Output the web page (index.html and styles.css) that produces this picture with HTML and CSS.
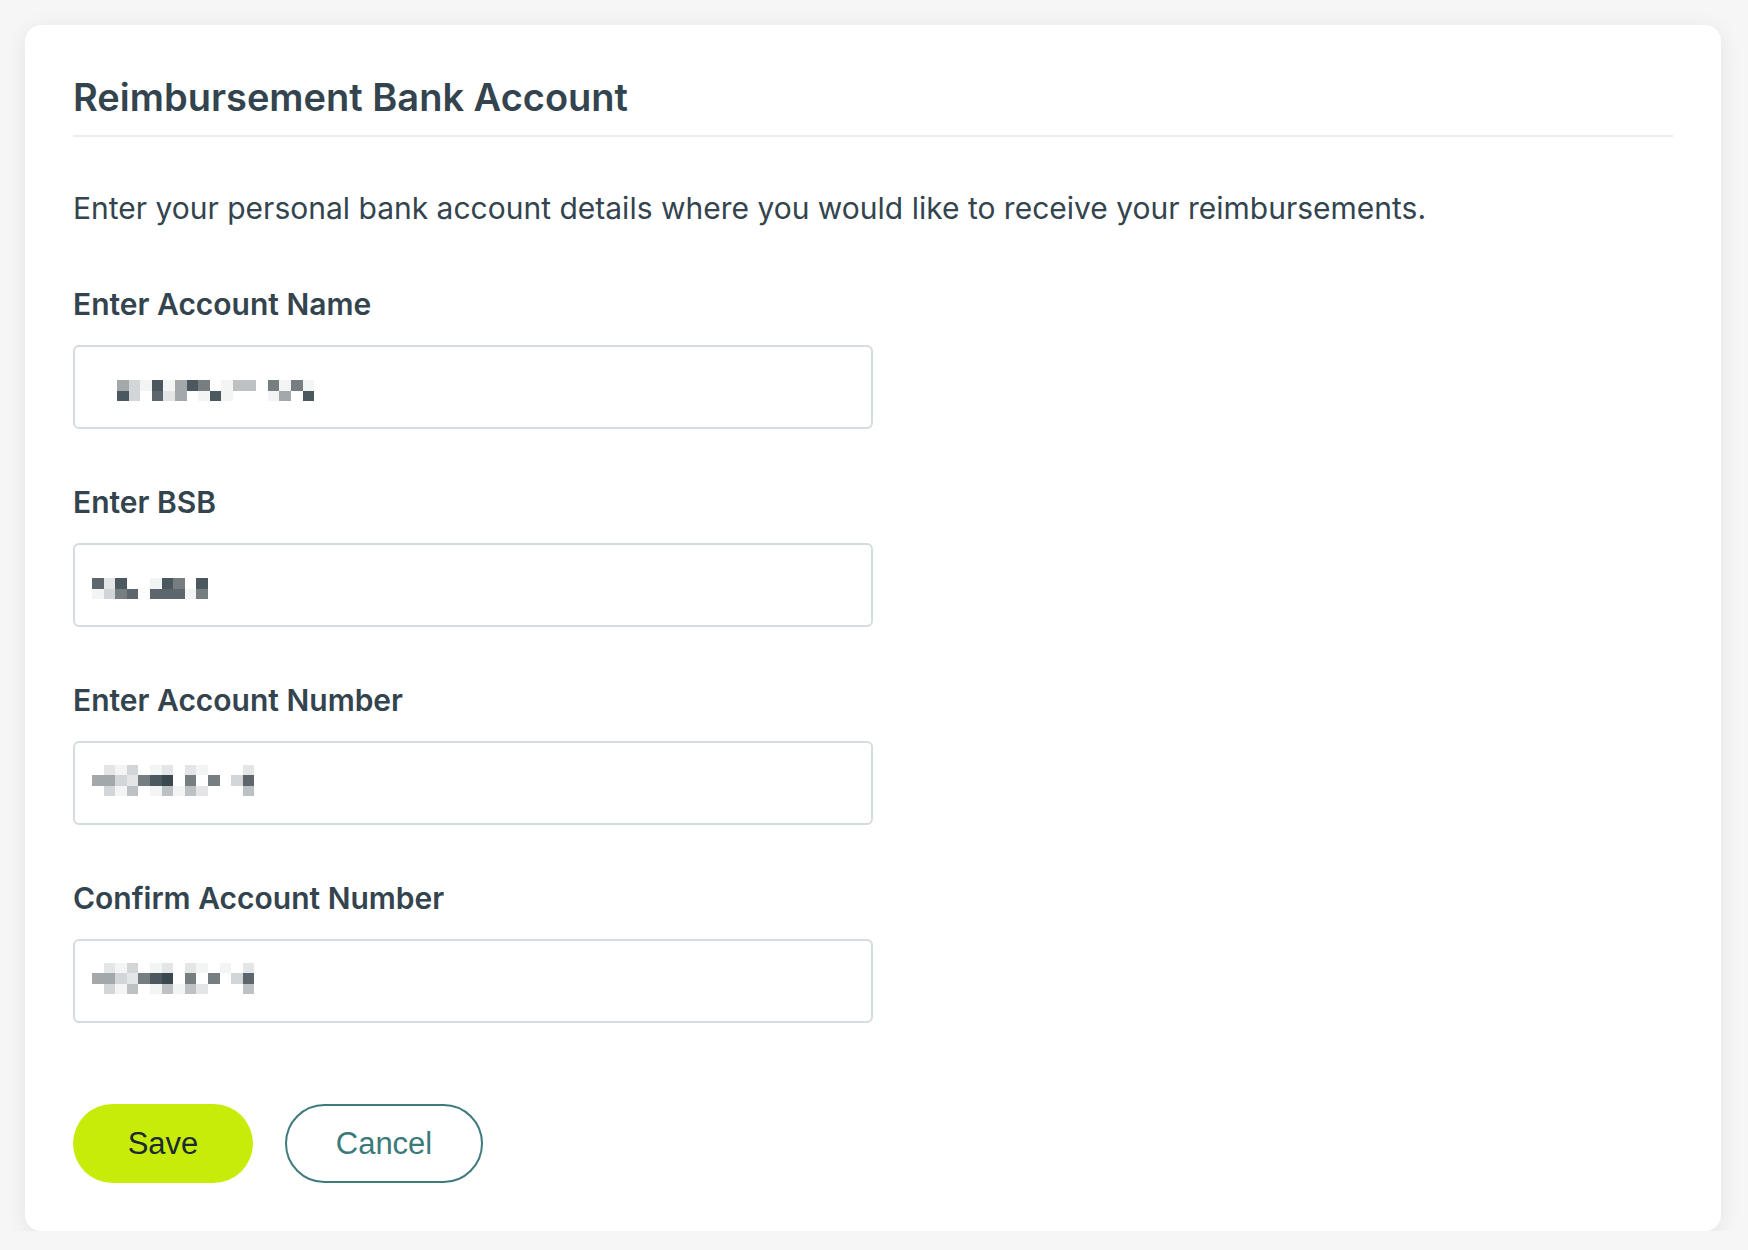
FILE: index.html
```html
<!DOCTYPE html>
<html lang="en">
<head>
    <meta charset="UTF-8">
    <meta name="viewport" content="width=device-width, initial-scale=1.0">
    <title>Reimbursement Bank Account</title>
    <link rel="stylesheet" href="styles.css">
</head>
<body>
    <div class="card">
        <h1>Reimbursement Bank Account</h1>

        <p class="intro">Enter your personal bank account details where you would like to receive your reimbursements.</p>

        <div class="field">
            <label>Enter Account Name</label>
            <div class="input-box">
                <div class="mosaic short indent">
                    <div class="mrow"><span class="k5"></span><span class="k3"></span><span class="k1"></span><span class="k8"></span><span class="k1"></span><span class="k5"></span><span class="k8"></span><span class="k6"></span><span></span><span class="k1"></span><span class="k4"></span><span class="k4"></span><span></span><span class="k6"></span><span class="k1"></span><span class="k6"></span><span class="k1"></span></div>
                    <div class="mrow"><span class="k8"></span><span class="k3"></span><span></span><span class="k7"></span><span class="k2"></span><span class="k5"></span><span></span><span class="k1"></span><span class="k8"></span><span class="k1"></span><span></span><span></span><span></span><span class="k1"></span><span class="k5"></span><span></span><span class="k8"></span></div>
                </div>
            </div>
        </div>

        <div class="field">
            <label>Enter BSB</label>
            <div class="input-box">
                <div class="mosaic short">
                    <div class="mrow"><span class="k7"></span><span class="k2"></span><span class="k8"></span><span></span><span></span><span class="k1"></span><span class="k8"></span><span class="k6"></span><span></span><span class="k8"></span></div>
                    <div class="mrow"><span class="k1"></span><span class="k3"></span><span class="k6"></span><span class="k7"></span><span></span><span class="k7"></span><span class="k7"></span><span class="k7"></span><span class="k1"></span><span class="k6"></span></div>
                </div>
            </div>
        </div>

        <div class="field">
            <label>Enter Account Number</label>
            <div class="input-box">
                <div class="mosaic tall">
                    <div class="mrow"><span></span><span class="k2"></span><span class="k1"></span><span class="k3"></span><span></span><span class="k1"></span><span class="k2"></span><span></span><span class="k2"></span><span class="k1"></span><span></span><span></span><span></span><span class="k2"></span></div>
                    <div class="mrow"><span class="k5"></span><span class="k5"></span><span class="k3"></span><span class="k2"></span><span class="k6"></span><span class="k8"></span><span class="k9"></span><span></span><span class="k6"></span><span></span><span class="k6"></span><span></span><span class="k3"></span><span class="k7"></span></div>
                    <div class="mrow"><span></span><span class="k3"></span><span class="k1"></span><span class="k4"></span><span></span><span class="k1"></span><span class="k4"></span><span class="k1"></span><span class="k4"></span><span class="k2"></span><span></span><span></span><span></span><span class="k4"></span></div>
                </div>
            </div>
        </div>

        <div class="field">
            <label>Confirm Account Number</label>
            <div class="input-box">
                <div class="mosaic tall">
                    <div class="mrow"><span></span><span class="k2"></span><span class="k1"></span><span class="k3"></span><span></span><span class="k1"></span><span class="k2"></span><span></span><span class="k2"></span><span class="k1"></span><span></span><span class="k1"></span><span></span><span class="k2"></span></div>
                    <div class="mrow"><span class="k5"></span><span class="k5"></span><span class="k3"></span><span class="k2"></span><span class="k6"></span><span class="k8"></span><span class="k9"></span><span></span><span class="k6"></span><span></span><span class="k6"></span><span></span><span class="k3"></span><span class="k7"></span></div>
                    <div class="mrow"><span></span><span class="k3"></span><span class="k1"></span><span class="k4"></span><span></span><span class="k1"></span><span class="k4"></span><span class="k1"></span><span class="k4"></span><span class="k2"></span><span></span><span></span><span></span><span class="k4"></span></div>
                </div>
            </div>
        </div>

        <div class="actions">
            <button class="btn btn-save">Save</button>
            <button class="btn btn-cancel">Cancel</button>
        </div>
    </div>
</body>
</html>
```

FILE: styles.css
```css
* {
    margin: 0;
    padding: 0;
    box-sizing: border-box;
}

body {
    background-color: #f6f6f6;
    padding: 25px 27px 0 25px;
    font-family: Inter, "Liberation Sans", sans-serif;
    color: #33444e;
}

.card {
    background: white;
    border-radius: 16px;
    padding: 48px;
    box-shadow: 0 4px 22px rgba(0, 0, 0, 0.08);
}

h1 {
    font-size: 38px;
    font-weight: 600;
    line-height: 48px;
    padding-bottom: 14px;
    border-bottom: 2px solid #ececec;
}

.intro {
    margin-top: 54px;
    font-size: 30px;
    line-height: 34px;
}

.field {
    margin-top: 62px;
}

.field + .field {
    margin-top: 56px;
}

label {
    display: block;
    font-size: 30px;
    line-height: 34px;
    font-weight: 600;
    margin-bottom: 24px;
}

.input-box {
    width: 800px;
    height: 84px;
    border: 2px solid #d3dcdf;
    border-radius: 6px;
    padding-left: 17px;
    display: flex;
    align-items: center;
}

/* pixelated (redacted) values */
.mosaic .mrow {
    display: flex;
}

.mosaic span {
    width: 11.6px;
    height: 10.5px;
}

.mosaic.short {
    margin-top: 7px;
}

.mosaic.tall {
    margin-top: -5px;
}

.mosaic.indent {
    margin-left: 25px;
}

.k1 { background: #f3f4f4; }
.k2 { background: #e3e5e7; }
.k3 { background: #d2d6d8; }
.k4 { background: #bec1c4; }
.k5 { background: #a3a8ab; }
.k6 { background: #767e82; }
.k7 { background: #5c666c; }
.k8 { background: #4b5860; }
.k9 { background: #3b4850; }

.actions {
    margin-top: 81px;
    display: flex;
    gap: 32px;
}

.btn {
    height: 79px;
    border-radius: 40px;
    font-family: "Liberation Sans", Arial, sans-serif;
    font-size: 31px;
    cursor: pointer;
}

.btn-save {
    width: 180px;
    border: none;
    background-color: #c8ec0a;
    color: #1b2a33;
}

.btn-cancel {
    width: 198px;
    border: 2px solid #3f7b7c;
    background: white;
    color: #3b7a7b;
}
```
